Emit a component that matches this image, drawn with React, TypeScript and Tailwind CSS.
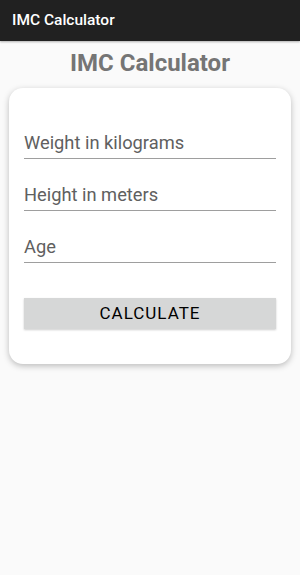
import React from 'react';

const fields = ['Weight in kilograms', 'Height in meters', 'Age'];

export default function App() {
  return (
    <div className="min-h-[575px] w-[300px] bg-[#fafafa] font-['Roboto',sans-serif]">
      <div className="flex h-[41px] items-center bg-[#212121] px-[12px] shadow-[0_1px_2px_rgba(0,0,0,0.3)]">
        <span className="text-[15.5px] font-medium text-white">IMC Calculator</span>
      </div>

      <h1 className="pt-[8px] text-center text-[24px] font-bold leading-[28px] text-[#757575]">
        IMC Calculator
      </h1>

      <div className="mx-[9px] mt-[11px] rounded-[14px] bg-white px-[15px] pt-[41px] pb-[35px] shadow-[0_2px_6px_rgba(0,0,0,0.25)]">
        <div className="flex flex-col gap-[22px]">
          {fields.map((f) => (
            <div key={f} className="border-b border-[#9e9e9e] pb-[1px]">
              <span className="block text-[18.3px] leading-[28px] text-[#606060]">{f}</span>
            </div>
          ))}
        </div>
        <button className="mt-[35px] flex h-[31px] w-full items-center justify-center bg-[#d6d7d7] text-[17px] tracking-[1px] text-black shadow-[0_1px_2px_rgba(0,0,0,0.2)]">
          CALCULATE
        </button>
      </div>
    </div>
  );
}
